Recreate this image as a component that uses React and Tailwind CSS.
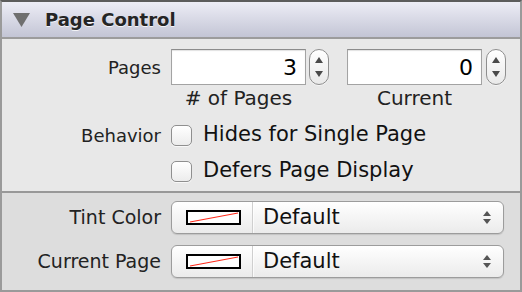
import React from "react";

const font = { fontFamily: '"DejaVu Sans", "Lucida Grande", sans-serif' };

function Stepper() {
  return (
    <div className="w-[20px] h-[36px] rounded-full border border-[#8e8e8e] bg-gradient-to-b from-[#ffffff] to-[#e9e9e9] flex flex-col items-center justify-between py-[7px] shadow-[0_1px_0_rgba(255,255,255,0.6)]">
      <svg width="8" height="6" viewBox="0 0 8 6">
        <polygon points="4,0 8,6 0,6" fill="#4a4a4a" />
      </svg>
      <svg width="8" height="6" viewBox="0 0 8 6">
        <polygon points="0,0 8,0 4,6" fill="#4a4a4a" />
      </svg>
    </div>
  );
}

function NumberField({ value }) {
  return (
    <div className="w-[135px] h-[36px] bg-white border border-[#a3a3a3] border-t-[#8c8c8c] shadow-[inset_0_1px_1px_rgba(0,0,0,0.12)] flex items-center justify-end pr-[8px] text-[22px] text-black">
      {value}
    </div>
  );
}

function Checkbox({ label }) {
  return (
    <div className="flex items-center h-[26px]">
      <div className="w-[21px] h-[21px] rounded-[5px] border border-[#8f8f8f] bg-gradient-to-b from-[#ffffff] to-[#ececec] shadow-[0_1px_0_rgba(255,255,255,0.7)]" />
      <span className="ml-[11px] text-[21px] text-[#111]">{label}</span>
    </div>
  );
}

function Popup() {
  return (
    <div className="w-[333px] h-[33px] rounded-[6px] border border-[#9c9c9c] bg-gradient-to-b from-[#ffffff] to-[#ebebeb] shadow-[0_1px_1px_rgba(0,0,0,0.12)] flex items-center">
      <div className="ml-[14px] w-[55px] h-[15px] border-2 border-black bg-white">
        <svg width="51" height="11" viewBox="0 0 51 11" className="block">
          <line x1="2" y1="10" x2="50" y2="1" stroke="#ff2a1a" strokeWidth="1.2" />
        </svg>
      </div>
      <div className="ml-[11px] h-full w-[2px] border-l border-[#cfcfcf] bg-white/70" />
      <span className="ml-[9px] text-[21px] text-[#111]">Default</span>
      <div className="ml-auto mr-[12px] flex flex-col gap-[3px]">
        <svg width="8" height="5" viewBox="0 0 8 5">
          <polygon points="4,0 8,5 0,5" fill="#555" />
        </svg>
        <svg width="8" height="5" viewBox="0 0 8 5">
          <polygon points="0,0 8,0 4,5" fill="#555" />
        </svg>
      </div>
    </div>
  );
}

export default function App() {
  return (
    <div
      style={font}
      className="w-[522px] h-[292px] flex flex-col border-x-2 border-b-2 border-t-2 border-x-[#9a9a9a] border-b-[#9a9a9a] border-t-[#5c5c5c] overflow-hidden"
    >
      {/* Header */}
      <div className="h-[37px] shrink-0 border-b-2 border-[#9c9c9c] bg-gradient-to-b from-[#ededf6] to-[#c3c5d5] flex items-center">
        <svg width="17" height="14" viewBox="0 0 17 14" className="ml-[11px]">
          <polygon points="0,0 17,0 8.5,14" fill="#6f6f6f" />
        </svg>
        <span className="ml-[15px] text-[18px] font-bold text-[#252525] [text-shadow:0_1px_0_rgba(255,255,255,0.8)]">
          Page Control
        </span>
      </div>

      {/* Pages / Behavior */}
      <div className="h-[154px] shrink-0 bg-[#e8e8e8] border-b-2 border-[#989898] pt-[10px]">
        <div className="flex items-center">
          <div className="w-[159px] text-right text-[18px] text-[#222]">Pages</div>
          <div className="ml-[10px] flex items-center">
            <NumberField value="3" />
            <div className="ml-[3px]">
              <Stepper />
            </div>
            <div className="ml-[18px]">
              <NumberField value="0" />
            </div>
            <div className="ml-[4px]">
              <Stepper />
            </div>
          </div>
        </div>
        <div className="flex mt-[2px] text-[20px] text-[#222] leading-[22px]">
          <div className="ml-[169px] w-[135px] text-center">{"# of Pages"}</div>
          <div className="ml-[41px] w-[135px] text-center">Current</div>
        </div>
        <div className="flex mt-[13px]">
          <div className="w-[159px] h-[26px] flex items-center justify-end text-[18px] text-[#222]">
            Behavior
          </div>
          <div className="ml-[10px] flex flex-col gap-[10px]">
            <Checkbox label="Hides for Single Page" />
            <Checkbox label="Defers Page Display" />
          </div>
        </div>
      </div>

      {/* Colors */}
      <div className="flex-1 bg-[#dddddd] pt-[8px] flex flex-col gap-[11px]">
        <div className="flex items-center">
          <div className="w-[159px] text-right text-[19px] text-[#222]">Tint Color</div>
          <div className="ml-[10px]">
            <Popup />
          </div>
        </div>
        <div className="flex items-center">
          <div className="w-[159px] text-right text-[19px] text-[#222]">Current Page</div>
          <div className="ml-[10px]">
            <Popup />
          </div>
        </div>
      </div>
    </div>
  );
}
